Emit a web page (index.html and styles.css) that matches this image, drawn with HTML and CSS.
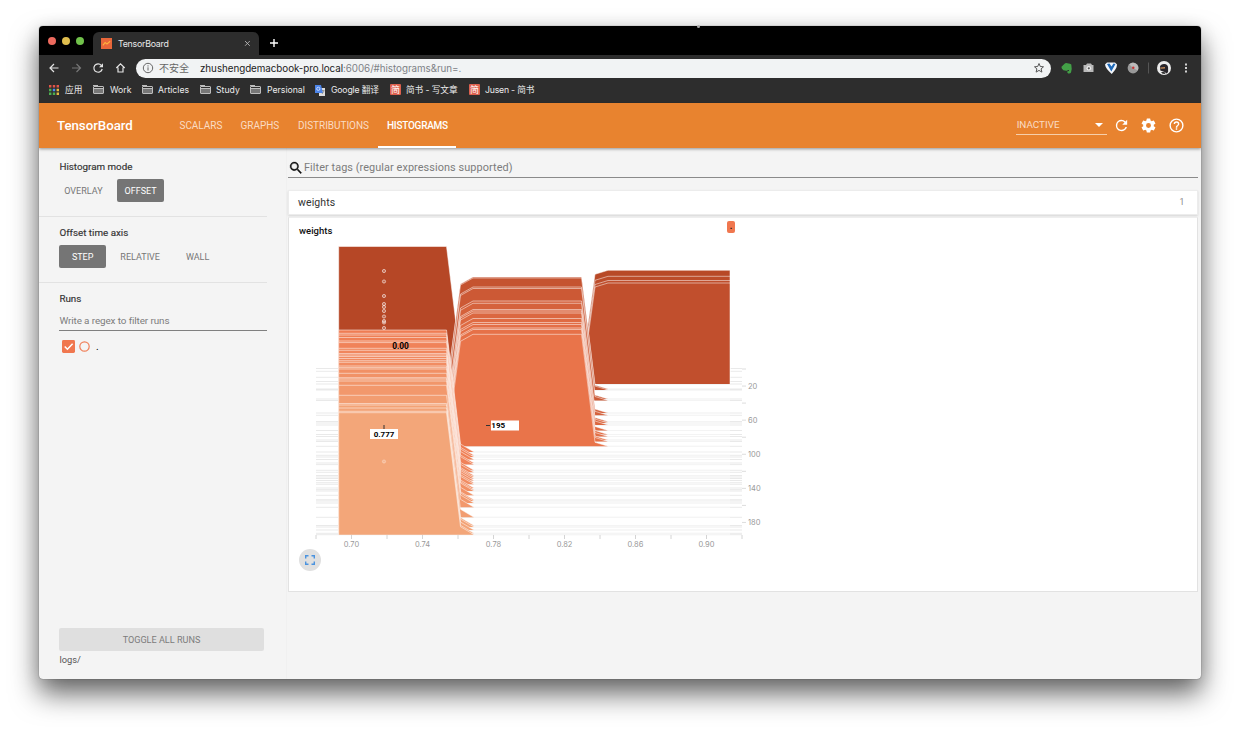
FILE: index.html
```
<!DOCTYPE html>
<html lang="zh">
<head>
<meta charset="utf-8">
<title>TensorBoard</title>
<link rel="stylesheet" href="styles.css">
</head>
<body>
<div class="window">
  <div class="tabstrip">
    <div class="lights"><i class="red"></i><i class="yellow"></i><i class="green"></i></div>
    <div class="tab">
      <svg class="fav" viewBox="0 0 12 12"><rect width="12" height="12" fill="#e8663a"/><path d="M2 8l2.500-3 2 1.500L10 3.500" fill="none" stroke="#ffb13d" stroke-width="1.200"/></svg>
      <span class="tab-title">TensorBoard</span>
      <svg class="close" viewBox="0 0 8 8"><path d="M1.200 1.200l5.400 5.400M6.600 1.200L1.200 6.600" stroke="#bbb" stroke-width="1"/></svg>
    </div>
    <svg class="plus" viewBox="0 0 10 10"><path d="M5 1v8M1 5h8" stroke="#fff" stroke-width="1.400"/></svg>
  </div>
  <div class="toolbar">
    <svg class="nav-icons" viewBox="0 0 97 26" fill="none" stroke="#e4e4e4" stroke-width="1.200">
      <path d="M19.500 13h-8.500M15 9l-4 4 4 4"/>
      <path stroke="#777" d="M33 13h8.500M37.500 9l4 4-4 4"/>
      <path d="M62.300 10.300a4.200 4.200 0 1 0 .9 3.700"/><path d="M64 8.300v4h-4z" fill="#e4e4e4" stroke="none"/>
      <path d="M77.300 13l4.200-4.100 4.200 4.100M79 12.500v4.500h5v-4.500"/>
    </svg>
    <div class="omnibox">
      <svg class="info" viewBox="0 0 12 12"><circle cx="6" cy="6" r="4.700" fill="none" stroke="#666" stroke-width="1"/><path d="M6 5.300v3.200M6 3.300v1.200" stroke="#666"/></svg>
      <span class="unsafe">不安全</span>
      <span class="url">zhushengdemacbook-pro.local<span>:6006/#histograms&amp;run=.</span></span>
      <svg class="star" viewBox="0 0 12 12"><path d="M6 1.500l1.300 3 3.200.3-2.400 2.100.8 3.200L6 8.400l-2.900 1.700.8-3.200L1.500 4.800l3.200-.3z" fill="none" stroke="#555"/></svg>
    </div>
    <svg class="extensions" viewBox="0 0 150 26">
      <path d="M10.500 11.800L13.300 9q1.200-1.300 3-.8 3.300.1 4 1.400 1 4.800-.3 8-.7 1.300-2.800.9-1.400-.6-.8-2.200l1.600-.4v-.9q-1.500-.3-2 .8-4.200.3-5-2-.6-1-.5-2z" fill="#43a047"/>
      <path d="M32.500 10h2.500l1-1.600h4l1 1.600h1.500v7h-10z" fill="#b9b9b9"/><circle cx="37.800" cy="13.300" r="2.300" fill="#eee"/><circle cx="37.800" cy="13.300" r="1.100" fill="#555"/>
      <path d="M54 9.500l2-2h8l2 2q0 4-5.300 9.500Q54.500 13.500 54 9.500z" fill="#f3f6fb"/><path d="M56 9l4.300 7.500L64.500 9l-2-.5-2 3-2-3z" fill="#1e69b8"/>
      <circle cx="82" cy="13" r="5.400" fill="#999"/><path d="M78.200 9.300a5.400 5.400 0 0 1 8.600 6.200L82 13z" fill="#bcbcbc"/><circle cx="82.300" cy="12.700" r="1.200" fill="#c33"/>
      <path d="M97.500 7.500v11" stroke="#555"/>
      <circle cx="113" cy="13" r="7" fill="#ececec"/><path d="M109 11.500q.7-2.700 4.300-2.600 3.500.2 3.800 3.500v4.600l-1.500 1.500-2-1.500-4.300-1.500z" fill="#28252a"/><path d="M109.300 12.500l4.700-.4v1.400l-4.300.3z" fill="#c48b59"/><path d="M110 17h3.500l1 2-3-.3z" fill="#333"/>
      <path d="M135 8.600v1.800M135 12.100v1.800M135 15.600v1.800" stroke="#e6e6e6" stroke-width="1.800"/>
    </svg>
  </div>
  <div class="bookmarks">
    <span class="bm b-apps"><svg class="apps" viewBox="0 0 10 10"><path d="M0 0h2.400v2.400H0zM3.800 0h2.400v2.400H3.800zM7.600 0H10v2.400H7.600z" fill="#e15549"/><path d="M0 3.800h2.400v2.400H0z" fill="#4caf50"/><path d="M3.800 3.800h2.400v2.400H3.800z" fill="#4b8df0"/><path d="M7.600 3.800H10v2.400H7.600zM7.600 7.600H10V10H7.600z" fill="#e5b843"/><path d="M0 7.600h2.400V10H0zM3.800 7.600h2.400V10H3.800z" fill="#4caf50"/></svg>应用</span>
    <span class="bm b-work"><i class="folder"></i>Work</span>
    <span class="bm b-art"><i class="folder"></i>Articles</span>
    <span class="bm b-study"><i class="folder"></i>Study</span>
    <span class="bm b-pers"><i class="folder"></i>Persional</span>
    <span class="bm b-trans"><svg viewBox="0 0 12 12"><rect x="5" y="4" width="6" height="8" fill="#ddd"/><path d="M1 1h6l2 8H1z" fill="#4c84e8"/><circle cx="4.300" cy="4.800" r="1.600" fill="none" stroke="#dfe9ff" stroke-width=".8"/><path d="M8 6.500h2.500M8 10l2-3" stroke="#777" stroke-width=".7"/></svg>Google 翻译</span>
    <span class="bm b-jian"><i class="jian">简</i>简书 - 写文章</span>
    <span class="bm b-last"><i class="jian">简</i>Jusen - 简书</span>
  </div>
  <header class="appbar">
    <div class="brand">TensorBoard</div>
    <nav>
      <a class="t1">SCALARS</a><a class="t2">GRAPHS</a><a class="t3">DISTRIBUTIONS</a><a class="t4 active">HISTOGRAMS</a>
    </nav>
    <div class="select"><span>INACTIVE</span><i></i></div>
    <svg class="ai" viewBox="0 0 24 24"><path d="M17.650 6.350A7.960 7.960 0 0 0 12 4a8 8 0 1 0 7.730 10h-2.080A6 6 0 1 1 12 6c1.660 0 3.140.69 4.220 1.780L13 11h7V4z"/></svg>
    <svg class="ai" viewBox="0 0 24 24"><path d="M19.430 12.980c.04-.32.07-.64.07-.98s-.03-.66-.07-.98l2.110-1.650a.5.500 0 0 0 .12-.64l-2-3.460a.5.500 0 0 0-.61-.22l-2.490 1a7.300 7.300 0 0 0-1.690-.98l-.38-2.650A.49.490 0 0 0 14 2h-4a.49.490 0 0 0-.49.420l-.38 2.650c-.61.250-1.170.590-1.690.98l-2.490-1a.5.500 0 0 0-.61.220l-2 3.460a.5.500 0 0 0 .12.640l2.110 1.650c-.04.320-.07.650-.07.980s.03.660.07.980l-2.110 1.650a.5.500 0 0 0-.12.640l2 3.460c.12.220.39.300.61.220l2.490-1c.52.400 1.080.730 1.690.98l.38 2.650c.03.240.24.420.49.420h4c.25 0 .46-.18.490-.42l.38-2.650a7.300 7.300 0 0 0 1.690-.98l2.490 1c.23.090.49 0 .61-.22l2-3.460a.5.500 0 0 0-.12-.64zM12 15.500a3.500 3.500 0 1 1 0-7 3.500 3.500 0 0 1 0 7z"/></svg>
    <svg class="ai" viewBox="0 0 24 24"><path d="M11 18h2v-2h-2v2zm1-16a10 10 0 1 0 0 20 10 10 0 0 0 0-20zm0 18a8 8 0 1 1 0-16 8 8 0 0 1 0 16zm0-14a4 4 0 0 0-4 4h2a2 2 0 1 1 4 0c0 2-3 1.750-3 5h2c0-2.250 3-2.500 3-5a4 4 0 0 0-4-4z"/></svg>
  </header>
  <main>
    <aside>
      <section class="s-mode">
        <h3>Histogram mode</h3>
        <div class="btns"><button class="first">OVERLAY</button><button class="on">OFFSET</button></div>
      </section>
      <section class="s-axis">
        <h3>Offset time axis</h3>
        <div class="btns"><button class="on">STEP</button><button class="rel">RELATIVE</button><button class="wall">WALL</button></div>
      </section>
      <section class="s-runs">
        <h3>Runs</h3>
        <div class="regex">Write a regex to filter runs</div>
        <div class="run"><svg class="check" viewBox="0 0 12 12"><rect width="12" height="12" rx="1.300"/><path d="M2.500 6l2.500 2.500 4.800-5" fill="none" stroke="#fff" stroke-width="1.400"/></svg><svg class="ring" viewBox="0 0 11 11"><circle cx="5.500" cy="5.500" r="4.700"/></svg><span>.</span></div>
      </section>
      <div class="toggle">TOGGLE ALL RUNS</div>
      <div class="logs">logs/</div>
    </aside>
    <div class="content">
      <div class="filter"><svg viewBox="0 0 24 24"><path d="M15.500 14h-.79l-.28-.27A6.500 6.500 0 1 0 13.730 14.430l.27.280v.79l5 5L20.500 19zm-6 0a4.500 4.500 0 1 1 0-9 4.500 4.500 0 0 1 0 9z" stroke="#111" stroke-width=".5"/></svg><span>Filter tags (regular expressions supported)</span></div>
      <div class="cat"><span>weights</span><em>1</em></div>
      <div class="card">
        <div class="card-head"><span>weights</span><b>.</b></div>
        <svg id="chart" viewBox="299 240 480 308"></svg>
        <div class="expand"><svg viewBox="0 0 10 10"><path d="M.7 3.500V.7h2.800M6.500.7h2.800v2.800M9.300 6.500v2.800H6.500M3.500 9.300H.7V6.500" fill="none" stroke="#4b93df" stroke-width="1.400"/></svg></div>
      </div>
    </div>
  </main>
</div>
<i class="speck"></i>
<script src="chart.js"></script>
</body>
</html>
```
FILE: styles.css
```
* { box-sizing: border-box; }
body { margin: 0; width: 1240px; height: 730px; overflow: hidden; background: #fff; padding: 26px 0 0 39px; font-family: Roboto, "Noto Sans CJK SC", sans-serif; }
svg { display: block; flex: none; }
i, em { font-style: normal; }
.window { width: 1162px; height: 653px; border-radius: 4px; overflow: hidden; background: #f4f4f4; display: flex; flex-direction: column; box-shadow: 0 0 1px rgba(0,0,0,.7), 0 15px 28px rgba(0,0,0,.58), 0 3px 18px rgba(0,0,0,.12); }
.speck { position: absolute; left: 697px; top: 25px; width: 3px; height: 3px; border-radius: 2px; background: #aaa; }

.tabstrip { height: 29px; background: #000; display: flex; align-items: flex-end; font-family: Inter, sans-serif; flex: none; }
.lights { display: flex; gap: 6px; padding: 0 9px 10px; width: 54px; }
.lights i { width: 8px; height: 8px; border-radius: 50%; }
.red { background: #ed6a5e; }
.yellow { background: #e0be4e; }
.green { background: #71c24b; }
.tab { width: 166px; height: 23px; background: #2d2d2d; border-radius: 6px 6px 0 0; display: flex; align-items: center; padding: 0 8px; color: #e8e8e8; font-size: 8.800px; }
.fav { width: 11px; height: 11px; margin-right: 6px; }
.tab-title { flex: 1; letter-spacing: -.25px; }
.close { width: 7px; height: 7px; }
.plus { width: 10px; height: 10px; margin: 0 0 7px 10px; }

.toolbar { height: 26px; background: #2d2d2d; display: flex; align-items: center; flex: none; }
.nav-icons { width: 97px; height: 26px; }
.omnibox { width: 915px; height: 19px; border-radius: 10px; background: #f1f3f4; display: flex; align-items: center; padding: 0 6px; }
.info { width: 12px; height: 12px; }
.unsafe { font: 10px "Noto Sans CJK SC", sans-serif; color: #666; width: 41px; margin-left: 5px; line-height: 18px; }
.url { flex: 1; font: 9.800px Inter, sans-serif; color: #222; letter-spacing: -.04px; }
.url span { color: #7d8186; }
.star { width: 12px; height: 12px; }
.extensions { width: 150px; height: 26px; }

.bookmarks { height: 22px; background: #2d2d2d; display: flex; align-items: center; padding: 0 0 5px 10px; color: #ececec; font: 8.700px Inter, "Noto Sans CJK SC", sans-serif; flex: none; }
.bm { display: flex; align-items: center; gap: 5px; white-space: nowrap; height: 14px; line-height: 14px; }
.bm svg { width: 12px; height: 12px; }
.b-apps { width: 44px; gap: 6px; }
.bm svg.apps { width: 10px; height: 10px; }
.b-work { width: 49px; gap: 6px; }
.b-art { width: 58px; }
.b-study { width: 50px; }
.b-pers { width: 64px; gap: 6px; }
.b-trans { width: 76px; letter-spacing: -.17px; }
.b-jian { width: 79px; letter-spacing: -.1px; }
.b-last { letter-spacing: -.2px; }
.folder { width: 11px; height: 8px; border: 1px solid #bdbdbd; border-radius: 1px; background: linear-gradient(#2d2d2d 1px, #bdbdbd 1px 2px, #777 2px); position: relative; }
.folder::before { content: ""; position: absolute; left: -1px; top: -2px; width: 5px; height: 1px; background: #bdbdbd; }
.jian { width: 11px; height: 11px; background: #dc604e; color: #fff; font-size: 9px; line-height: 11px; text-align: center; border-radius: 1px; }

.appbar { height: 45px; background: #e8832f; display: flex; align-items: center; color: #fff; box-shadow: 0 1px 3px rgba(0,0,0,.4); z-index: 1; flex: none; padding-left: 18px; }
.brand { font-size: 13.300px; font-weight: 500; width: 114px; letter-spacing: -.05px; }
nav { display: flex; height: 45px; flex: 1; }
nav a { font-size: 10px; line-height: 45px; color: #fadcc4; white-space: nowrap; padding: 0 9px; letter-spacing: -.04px; }
nav .t1 { width: 61px; padding-left: 8.500px; }
nav .t2 { width: 57px; padding-left: 8.500px; }
nav .t3 { width: 89px; }
nav .t4 { width: 78px; letter-spacing: -.25px; font-weight: 500; }
nav .active { color: #fff; border-bottom: 2px solid #fff; }
.select { width: 91px; height: 18px; border-bottom: 1px solid #f6cfab; display: flex; align-items: center; justify-content: space-between; font-size: 9.900px; color: #fadcc4; padding: 0 4px 1px 1px; margin-right: 6px; }
.select i { border: 4px solid transparent; border-top-color: #fff; border-bottom: 0; }
.ai { width: 17px; height: 17px; margin-right: 10.700px; fill: #fff; }
.ai:last-child { margin-right: 16px; }

main { flex: 1; display: flex; min-height: 0; }
aside { width: 248px; flex: none; display: flex; flex-direction: column; border-right: 1px solid #f0f0f0; }
aside section { width: 228px; padding-left: 20.400px; }
aside h3 { margin: 0; font-size: 9.800px; line-height: 14px; font-weight: 400; color: #333; letter-spacing: 0; -webkit-text-stroke: .15px #333; }
.s-mode { height: 69px; padding-top: 12px; border-bottom: 1px solid #e2e2e2; }
.s-axis { height: 66px; padding-top: 9px; border-bottom: 1px solid #e2e2e2; }
.s-runs { padding-top: 9px; flex: 1; }
.btns { display: flex; margin-top: 5px; }
button { border: 0; padding: 0; width: 46.500px; height: 23px; border-radius: 2px; background: none; font: 9px Roboto, sans-serif; color: #777; }
button.first { width: 48px; margin-right: 10px; }
button.on { background: #757575; color: #fff; }
button.rel { margin-left: 11px; }
button.wall { margin-left: 11px; }
.regex { font-size: 9.900px; line-height: 14px; color: #7c7c7c; border-bottom: 1px solid #808080; height: 25px; padding-top: 8px; letter-spacing: -.1px; white-space: nowrap; }
.run { display: flex; align-items: center; padding: 9px 0 0 2.500px; font-size: 10px; }
.check { width: 13px; height: 13px; fill: #f0774f; }
.ring { width: 11px; height: 11px; margin: 0 6px 0 4px; fill: none; stroke: #f0805a; stroke-width: 1.200; }
.toggle { margin-left: 20px; width: 205px; height: 23px; background: #dfdfdf; border-radius: 2px; text-align: center; font-size: 9.100px; line-height: 24px; color: #7c7c7c; }
.logs { font-size: 9.300px; color: #555; margin: 3px 0 13px 20.500px; line-height: 12px; }

.content { flex: 1; padding: 10px 3.500px 0 1px; }
.filter { height: 20px; border-bottom: 1px solid #8a8a8a; display: flex; align-items: center; font-size: 10.900px; color: #7c7c7c; letter-spacing: .07px; }
.filter svg { width: 16px; height: 16px; fill: #111; }
.cat { height: 25px; margin-top: 12px; background: #fff; border: 1px solid #ececec; box-shadow: 0 1px 2px rgba(0,0,0,.12); display: flex; align-items: center; justify-content: space-between; padding: 0 12px 0 9px; font-size: 10.500px; color: #333; letter-spacing: .1px; }
.cat em { font-size: 8.500px; color: #888; margin-top: -2px; }
.card { margin: 2px 0 0; height: 375px; background: #fff; border: 1px solid #e2e2e2; border-top-color: #eee; padding: 3px 0 0 10px; }
.card-head { display: flex; height: 19px; width: 436px; justify-content: space-between; font-size: 9.500px; line-height: 19px; color: #111; font-weight: 500; }
.card-head b { width: 8px; height: 12px; background: #f0774f; border-radius: 2px; font-size: 9px; line-height: 11px; text-align: center; }
#chart { width: 480px; height: 308px; }
.expand { width: 22px; height: 22px; border-radius: 50%; background: #e0e0e0; display: flex; align-items: center; justify-content: center; margin-top: .5px; }
.expand svg { width: 10px; height: 10px; }
```
FILE: chart.js
```
const NS = "http://www.w3.org/2000/svg";
const chart = document.getElementById("chart");
function add(tag, attrs, text) {
  const el = document.createElementNS(NS, tag);
  for (const k in attrs) el.setAttribute(k, attrs[k]);
  if (text) el.textContent = text;
  chart.appendChild(el);
}

// Slice colour runs from dark (early steps) to light (late steps).
const stops = [[368, [182, 71, 38]], [384, [193, 79, 45]], [446, [233, 116, 74]], [452, [239, 124, 83]], [535, [243, 166, 121]]];
function colour(b) {
  for (let i = 1; i < stops.length; i++) {
    const [y0, c0] = stops[i - 1], [y1, c1] = stops[i];
    if (b <= y1) return "rgb(" + c0.map((v, k) => Math.round(v + (c1[k] - v) * Math.max(0, b - y0) / (y1 - y0))) + ")";
  }
  return "rgb(243,166,121)";
}
const shapes = {
  a: b => [[338.7, b], [338.7, b - 122], [446.5, b - 122], [460.500, b - 8], [474, b]],
  b: b => [[446.5, b], [460.500, b - 105], [473, b - 112], [581.500, b - 112], [595, b - 4], [608, b]],
  c: b => [[581.500, b], [595, b - 97], [608, b - 101], [730, b - 101], [730, b]]
};
const slices = [["a", [368.5]], ["c", [371.300, 377.300, 381.500, 384]],
  ["b", [389, 390, 399, 400.500, 413, 415.300, 421.500, 423, 425, 430.500, 434.500, 436.500, 440, 441.500, 446.300]],
  ["a", [452, 455.300, 457, 459.500, 463, 464.600, 470.300, 472.300, 475.500, 477, 478.500, 480.500, 482.700, 484.300, 488, 489.600, 491, 495.300, 499.700, 501, 503, 507.300, 517.300, 525.500, 527, 530, 533.300, 534.700]]];
for (const [kind, list] of slices) for (const b of list) {
  const p = shapes[kind](b), s = p.map(q => q.join(",")).join(" ");
  add("path", { d: `M316 ${b}H742`, stroke: "#000", "stroke-opacity": .085, "stroke-width": 1 });
  add("polygon", { points: s, fill: colour(b) });
  add("polyline", { points: `${s} 730,${b}`, fill: "none", stroke: "#fff", "stroke-opacity": .5, "stroke-width": 1 });
}
for (const y of [271, 281.500, 296, 304, 307, 311, 316.500, 321, 322.500, 328, 461.500])
  add("circle", { cx: 384, cy: y, r: 1.600, fill: "#fff", "fill-opacity": .2, stroke: "#fff", "stroke-opacity": y > 400 ? .3 : .55 });

for (let i = 0; i <= 12; i++) {
  add("path", { d: `M${316 + 35.500 * i} 535v4`, stroke: "#d4d4d4", "stroke-width": 1 });
  if (i % 2) add("text", { x: 316 + 35.500 * i, y: 546.800, "text-anchor": "middle", "font-size": 7.500, fill: "#999", "font-family": "Inter" }, (0.68 + .02 * i).toFixed(2));
}
for (let i = 0; i <= 9; i++) {
  const y = 369 + 17.050 * i;
  add("path", { d: `M742 ${y}h4`, stroke: "#ddd", "stroke-width": 1 });
  if (i % 2) add("text", { x: 748, y: y + 2.800, "font-size": 7.500, fill: "#999", "font-family": "Inter" }, String(20 * i));
}
const bold = { "font-size": 8.3, "font-weight": 700, fill: "#000", "font-family": "Roboto" };
add("text", { ...bold, x: 400.500, y: 349.400, "text-anchor": "middle" }, "0.00");
add("path", { d: "M384 425v4M486 425.500h4", stroke: "#333", "stroke-width": 1 });
add("rect", { x: 370, y: 429, width: 28, height: 10, fill: "#fff" });
add("text", { ...bold, "font-size": 8, x: 384, y: 437.300, "text-anchor": "middle" }, "0.777");
add("rect", { x: 491, y: 420.500, width: 28, height: 10, fill: "#fff" });
add("text", { ...bold, "font-size": 8, x: 491.300, y: 428 }, "195");
```
